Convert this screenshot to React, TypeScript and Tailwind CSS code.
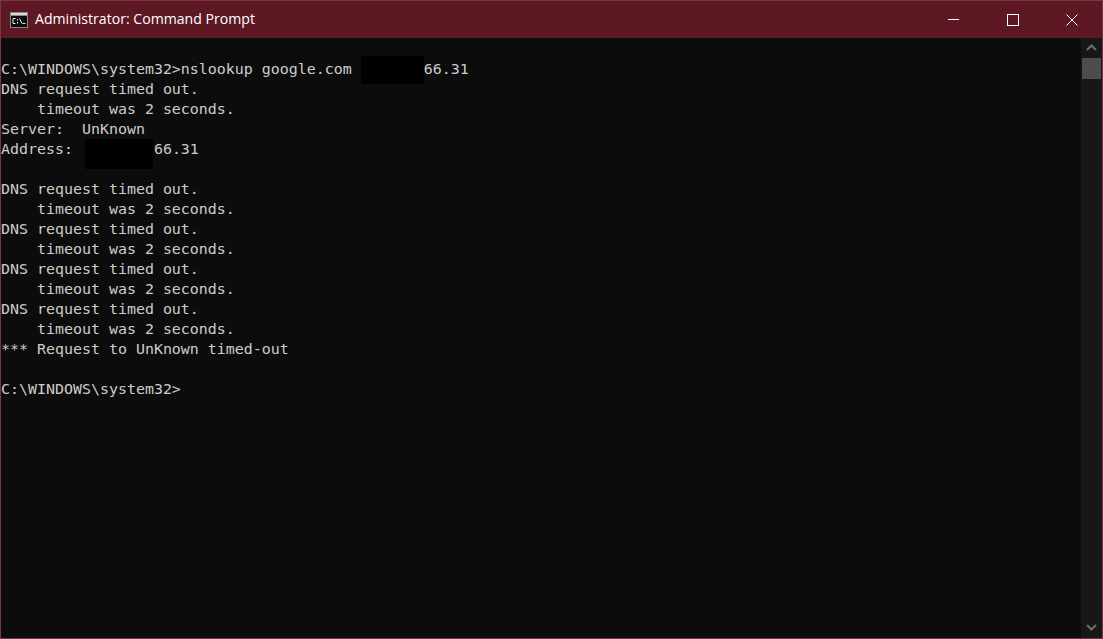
const lines: React.ReactNode[] = [
  <>
    C:\WINDOWS\system32&gt;nslookup google.com <Redact className="left-0 -top-[3px] w-[63px] h-[28px]" chars={7} />66.31
  </>,
  "DNS request timed out.",
  "    timeout was 2 seconds.",
  "Server:  UnKnown",
  <>
    Address:  <Redact className="-left-[6px] top-0 w-[68px] h-[30px]" chars={7} />66.31
  </>,
  "",
  "DNS request timed out.",
  "    timeout was 2 seconds.",
  "DNS request timed out.",
  "    timeout was 2 seconds.",
  "DNS request timed out.",
  "    timeout was 2 seconds.",
  "DNS request timed out.",
  "    timeout was 2 seconds.",
  "*** Request to UnKnown timed-out",
  "",
  "C:\\WINDOWS\\system32>",
];

function Redact({ className, chars }: { className: string; chars: number }) {
  return (
    <span className="relative inline-block align-baseline">
      {" ".repeat(chars)}
      <span className={`absolute bg-black ${className}`} />
    </span>
  );
}

function CmdIcon() {
  return (
    <svg width="18" height="16" viewBox="0 0 18 16" className="shrink-0">
      <rect x="0" y="0" width="18" height="16" fill="#8a8a8a" />
      <rect x="1" y="1" width="16" height="2" fill="#d8d8d8" />
      <rect x="1" y="4" width="16" height="11" fill="#0c0c0c" />
      <path d="M5.5 6.5H3V11.5H5.5M7.5 7V8.5M7.5 10V11.5M9.5 6.5L12 11.5M12.5 11.5H15.5" fill="none" stroke="#e8e8e8" strokeWidth="1" />
    </svg>
  );
}

export default function App() {
  return (
    <div className="flex h-[639px] w-[1103px] flex-col overflow-hidden border border-[#7c3642] bg-[#0c0c0c]">
      <header className="flex h-[37px] shrink-0 items-center bg-[#5d1823] text-white">
        <div className="ml-[9px] flex items-center gap-[7px]">
          <CmdIcon />
          <span className="font-['Open_Sans',sans-serif] text-[14.1px] leading-none">Administrator: Command Prompt</span>
        </div>
        <div className="ml-auto mr-[1px] flex h-full">
          <button className="flex w-[59px] items-center justify-center">
            <svg width="11" height="11" viewBox="0 0 11 11">
              <path d="M0 5.5H11" stroke="#fff" strokeWidth="1" />
            </svg>
          </button>
          <button className="flex w-[59px] items-center justify-center">
            <svg width="12" height="12" viewBox="0 0 12 12">
              <rect x="0.5" y="0.5" width="11" height="11" fill="none" stroke="#fff" strokeWidth="1" />
            </svg>
          </button>
          <button className="flex w-[59px] items-center justify-center">
            <svg width="12" height="12" viewBox="0 0 12 12">
              <path d="M0.5 0.5L11.5 11.5M11.5 0.5L0.5 11.5" stroke="#fff" strokeWidth="1" />
            </svg>
          </button>
        </div>
      </header>
      <div className="flex min-h-0 flex-1">
        <main className="flex-1 pt-[21px] font-['DejaVu_Sans_Mono',monospace] text-[14.95px] leading-[20px] text-[#cccccc]">
          {lines.map((line, i) => (
            <div key={i} className="h-[20px] whitespace-pre">
              {line}
            </div>
          ))}
        </main>
        <div className="flex w-[21px] shrink-0 flex-col items-center bg-[#171717]">
          <svg width="11" height="7" viewBox="0 0 11 7" className="mt-[6px]">
            <path d="M1 6L5.5 1.5L10 6" fill="none" stroke="#6e6e6e" strokeWidth="2" />
          </svg>
          <div className="mt-[7px] h-[21px] w-[19px] bg-[#4d4d4d]" />
          <svg width="11" height="7" viewBox="0 0 11 7" className="mb-[7px] mt-auto">
            <path d="M1 1L5.5 5.5L10 1" fill="none" stroke="#6e6e6e" strokeWidth="2" />
          </svg>
        </div>
      </div>
    </div>
  );
}
